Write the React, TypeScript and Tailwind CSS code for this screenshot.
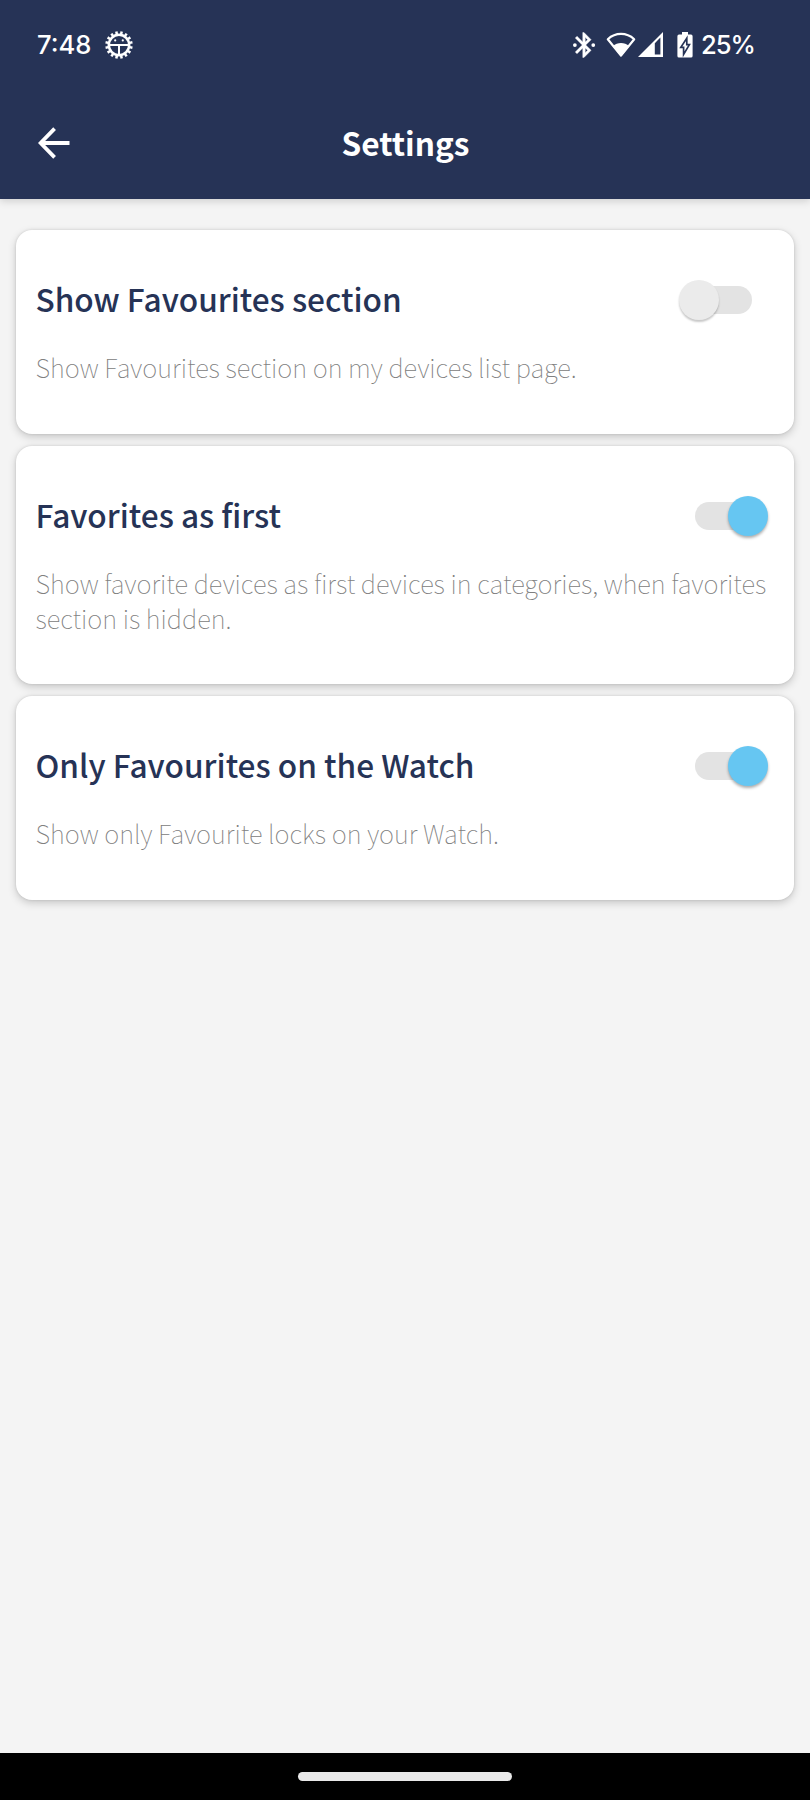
type Setting = { title: string; description: string; on: boolean };

const SETTINGS: Setting[] = [
  {
    title: "Show Favourites section",
    description: "Show Favourites section on my devices list page.",
    on: false,
  },
  {
    title: "Favorites as first",
    description:
      "Show favorite devices as first devices in categories, when favorites section is hidden.",
    on: true,
  },
  {
    title: "Only Favourites on the Watch",
    description: "Show only Favourite locks on your Watch.",
    on: true,
  },
];

const TEETH = Array.from({ length: 16 }, (_, i) => i * 22.5 + 11.25);

function GearIcon() {
  return (
    <svg className="h-7 w-7" viewBox="-14 -14 28 28" fill="none" stroke="#fff">
      <circle r="10.2" strokeWidth="2.5" />
      {TEETH.map((a) => (
        <path key={a} d="M0 -10.8V-13.7" strokeWidth="2.5" transform={`rotate(${a})`} />
      ))}
      <path d="M-10.3 0H10.3M0 0V10.3" strokeWidth="2" />
      <circle cx="-3.8" cy="-4.6" r="1.1" fill="#fff" stroke="none" />
      <circle cx="3.8" cy="-4.6" r="1.1" fill="#fff" stroke="none" />
    </svg>
  );
}

function BluetoothIcon() {
  return (
    <svg className="h-[30px] w-[30px]" viewBox="0 0 24 24" fill="#fff">
      <path
        stroke="#fff"
        strokeWidth="0.3"
        d="M17.71 7.71L12 2h-1v7.59L6.41 5 5 6.41 10.59 12 5 17.59 6.41 19 11 14.41V22h1l5.71-5.71L13.41 12zM13 5.83l1.88 1.88L13 9.59zm1.88 10.46L13 18.17v-3.76z"
      />
      <circle cx="4.7" cy="12" r="1.5" />
      <circle cx="19.4" cy="12" r="1.5" />
    </svg>
  );
}

function WifiIcon() {
  return (
    <svg className="h-[26px] w-[30px]" viewBox="0 0 30 26">
      <path
        d="M1.8 7.2C9.5 0.2 20.5 0.2 28.2 7.2L15 23.6Z"
        fill="none"
        stroke="#fff"
        strokeWidth="2.2"
        strokeLinejoin="round"
      />
      <path d="M6.8 14.2C11.5 10 18.5 10 23.2 14.2L15 24.6Z" fill="#fff" />
    </svg>
  );
}

function SignalIcon() {
  return (
    <svg className="h-[25px] w-[25px]" viewBox="0 0 25 25">
      <path fill="#fff" fillRule="evenodd" d="M0 25L25 0V25ZM16.8 11.2V22.4H22.4V5.6Z" />
    </svg>
  );
}

function BatteryIcon() {
  return (
    <svg className="h-[26px] w-4" viewBox="0 0 16 26">
      <path
        fill="#fff"
        d="M5 0H11V2.6H14Q15.6 2.6 15.6 4.2V24Q15.6 25.6 14 25.6H2Q.4 25.6 .4 24V4.2Q.4 2.6 2 2.6H5Z"
      />
      <path
        d="M9.8 6.2L3.8 15.4H6.6V22.4L12.4 12.6H9.8Z"
        fill="#fff"
        stroke="#263356"
        strokeWidth="1.7"
      />
    </svg>
  );
}

function BackArrow() {
  return (
    <svg className="h-8 w-8" viewBox="0 0 32 32" fill="none" stroke="#fff" strokeWidth="3.8">
      <path d="M16.6 1.6L2.6 16L16.6 30.4M3 16H31.5" />
    </svg>
  );
}

function Toggle({ on }: { on: boolean }) {
  return (
    <button
      role="switch"
      aria-checked={on}
      className="relative flex h-10 w-[90px] shrink-0 items-center justify-center"
    >
      <span className="h-7 w-[57px] rounded-full bg-[#e3e3e3]" />
      <span
        className={
          on
            ? "absolute top-0 right-0 size-10 rounded-full bg-[#66c6f2] shadow-[0_2px_3px_rgba(0,0,0,0.32)]"
            : "absolute top-0 left-px size-10 rounded-full bg-[#ebebeb] shadow-[0_2px_2px_rgba(0,0,0,0.22)]"
        }
      />
    </button>
  );
}

function SettingCard({ title, description, on }: Setting) {
  return (
    <section className="min-h-[204px] rounded-2xl bg-white pt-11 pb-[48.6px] pl-[19.5px] shadow-[0_3px_8px_rgba(0,0,0,0.18),0_0_3px_rgba(0,0,0,0.12)]">
      <div className="flex h-12 items-center justify-between pr-[26px]">
        <h2 className="text-[31.6px] leading-[48px] font-medium whitespace-nowrap text-[#263356]">
          {title}
        </h2>
        <div className="pt-1">
          <Toggle on={on} />
        </div>
      </div>
      <p className="mt-[28.4px] mr-5 text-[25.55px] leading-[34.5px] font-thin text-[#808080]">
        {description}
      </p>
    </section>
  );
}

export default function App() {
  return (
    <div className="flex h-[1800px] w-[810px] flex-col overflow-hidden bg-[#f4f4f4] font-['Noto_Sans_CJK_SC',sans-serif]">
      <header className="z-10 h-[199px] shrink-0 bg-[#263356] text-white shadow-[0_2px_8px_rgba(0,0,0,0.16)]">
        <div className="flex h-[90px] items-center justify-between pr-[55px] pl-[37px] font-[Inter,sans-serif] text-[25.6px] font-medium">
          <div className="flex items-center gap-[14px]">
            <span>7:48</span>
            <GearIcon />
          </div>
          <div className="flex items-center">
            <BluetoothIcon />
            <span className="ml-[7px] flex items-center gap-[2px]">
              <WifiIcon />
              <SignalIcon />
            </span>
            <span className="mr-2 ml-[14px]">
              <BatteryIcon />
            </span>
            <span className="tracking-[-1px]">25%</span>
          </div>
        </div>
        <div className="grid h-[106px] grid-cols-3 items-center px-[38px]">
          <BackArrow />
          <h1 className="pb-0.5 pl-px text-center text-[31.6px] leading-[48px] font-bold">
            Settings
          </h1>
        </div>
      </header>
      <main className="flex flex-1 flex-col gap-3 px-4 pt-[31px]">
        {SETTINGS.map((s) => (
          <SettingCard key={s.title} {...s} />
        ))}
      </main>
      <footer className="flex h-[47px] shrink-0 justify-center bg-black pt-[19px]">
        <span className="h-[9px] w-[214px] rounded-full bg-[#e9e9e9]" />
      </footer>
    </div>
  );
}
